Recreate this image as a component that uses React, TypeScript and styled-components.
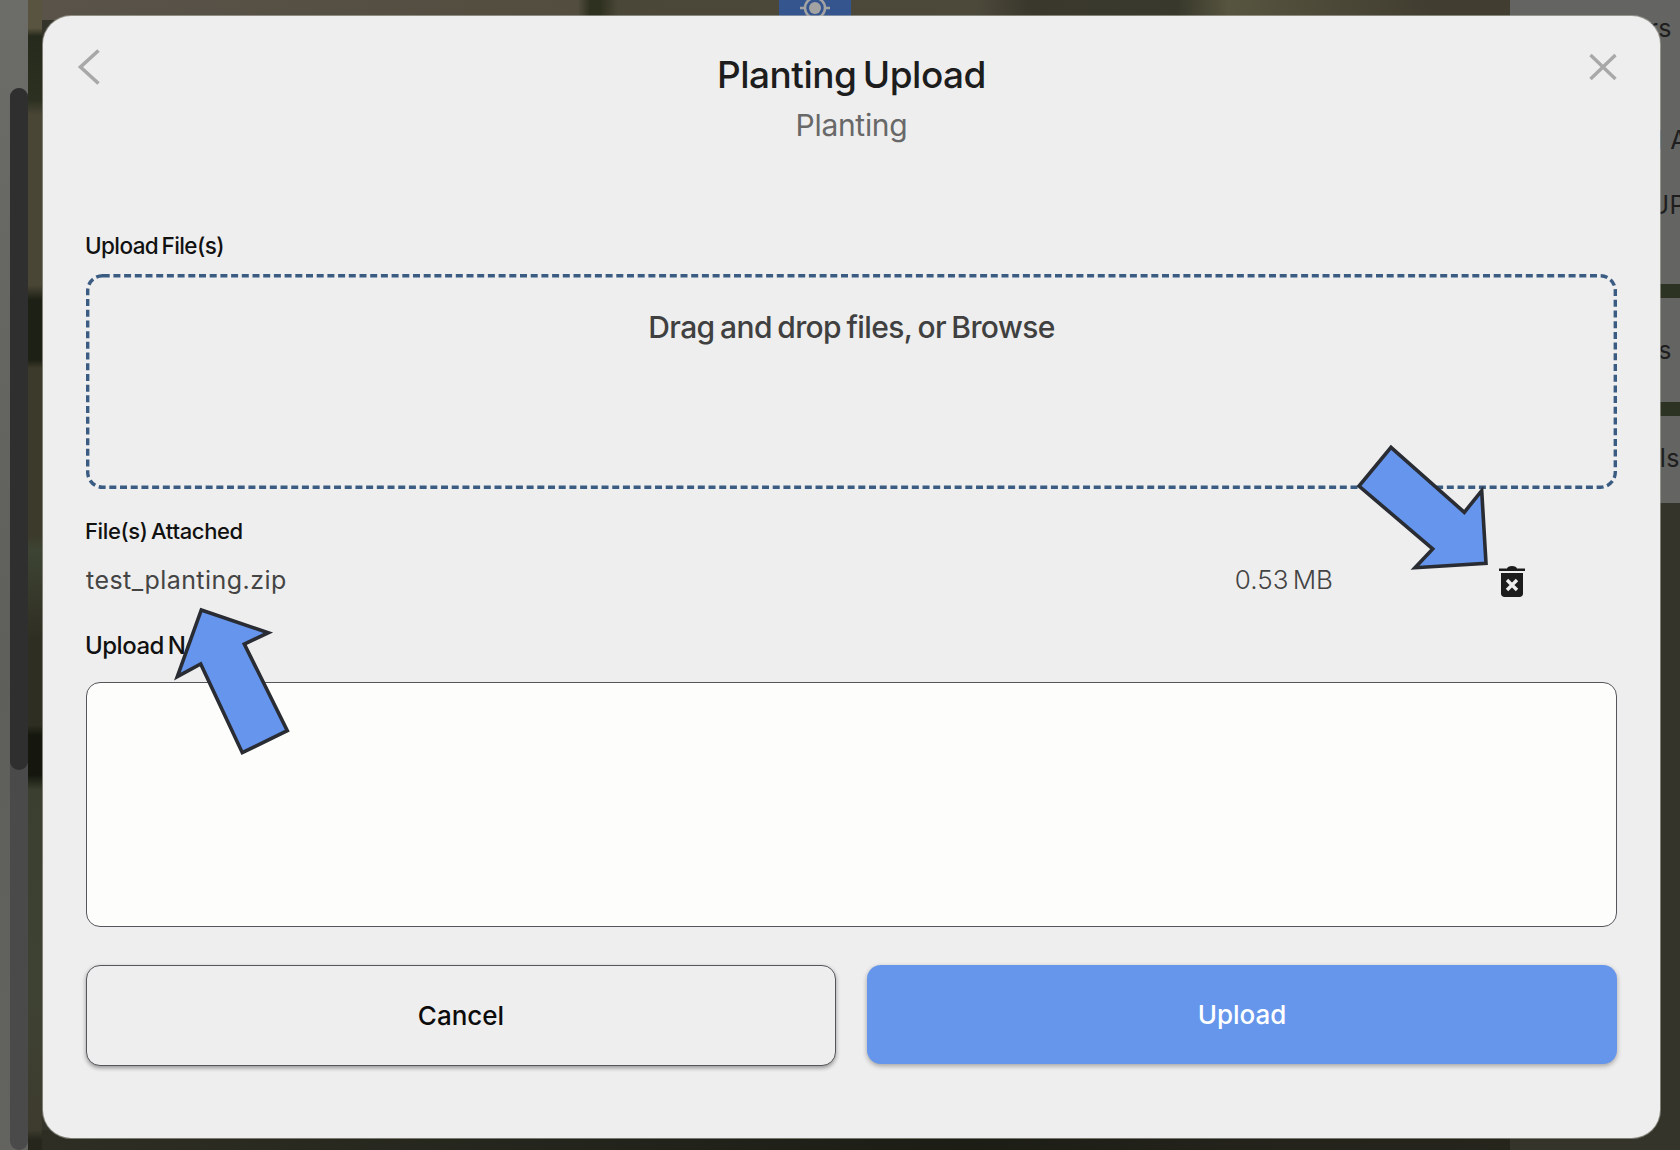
import styled, { createGlobalStyle } from "styled-components";

const GlobalStyle = createGlobalStyle`
  html, body {
    margin: 0;
    padding: 0;
    height: 100%;
    overflow: hidden;
  }
  body {
    font-family: "Inter", "Open Sans", sans-serif;
  }
`;

export default function App() {
  return (
    <Page>
      <GlobalStyle />
      <LeftRail>
        <ScrollTrack>
          <ScrollThumb />
        </ScrollTrack>
      </LeftRail>
      <MapArea>
        <LocateButton>
          <svg width="30" height="30" viewBox="0 0 30 30" fill="none" stroke="#a3a3a3" strokeWidth="2.5">
            <circle cx="15" cy="15" r="10" />
            <circle cx="15" cy="15" r="6" fill="#a3a3a3" stroke="none" />
            <path d="M15 0v5M15 25v5M0 15h5M25 15h5" />
          </svg>
        </LocateButton>
      </MapArea>
      <SidePanel>
        <SideCard $height={284}>
          <SideLabel $top={14} $right={8}>rs</SideLabel>
          <SideLabel $top={84} $right={-8}>l A</SideLabel>
          <SideLabel $top={37} $right={-6}>UP</SideLabel>
        </SideCard>
        <SideCard $height={104}>
          <SideLabel $top={38} $right={8}>s</SideLabel>
        </SideCard>
        <SideCard $height={87}>
          <SideLabel $top={28} $right={0}>ils</SideLabel>
        </SideCard>
      </SidePanel>

      <Modal>
        <Header>
          <BackIcon width="24" height="38" viewBox="0 0 24 38" fill="none">
            <path d="M21.5 2.5 3.5 19l18 16.5" stroke="#a8a8a8" strokeWidth="3.6" />
          </BackIcon>
          <TitleBlock>
            <Title>Planting Upload</Title>
            <Subtitle>Planting</Subtitle>
          </TitleBlock>
          <CloseIcon width="30" height="30" viewBox="0 0 30 30" fill="none">
            <path d="M2.5 3 27.5 27M27.5 3 2.5 27" stroke="#a8a8a8" strokeWidth="3.4" />
          </CloseIcon>
        </Header>

        <UploadLabel>Upload File(s)</UploadLabel>
        <DropZone>
          <DashedOutline width="1531" height="215" fill="none">
            <rect x="1.7" y="1.7" width="1527.6" height="211.6" rx="15" />
          </DashedOutline>
          Drag and drop files, or Browse
        </DropZone>

        <AttachedLabel>File(s) Attached</AttachedLabel>
        <FileRow>
          <FileName>test_planting.zip</FileName>
          <FileSize>0.53 MB</FileSize>
          <svg width="26" height="33" viewBox="0 0 26 33">
            <path d="M0 4.500h8C8.500 3 10 2 13 2s4.500 1 5 2.500h8V7H0z" fill="#1c1c1c" />
            <path d="M2 9h22v20.500c0 2-1.500 3.500-3.500 3.500h-15C3.500 33 2 31.500 2 29.500z" fill="#1c1c1c" />
            <path d="m8 16 10 10M18 16 8 26" stroke="#eeeeee" strokeWidth="3.4" />
          </svg>
        </FileRow>

        <NotesLabel>Upload Notes</NotesLabel>
        <NotesInput readOnly />

        <Actions>
          <CancelButton>Cancel</CancelButton>
          <UploadButton>Upload</UploadButton>
        </Actions>
      </Modal>

      <Arrow $left={1350} $top={438} width="146" height="140" viewBox="1350 438 146 140">
        <polygon points="1391,447.300 1464.300,512.300 1481.700,490.700 1486,563.300 1415,567.700 1432.700,549 1359,486" />
      </Arrow>
      <Arrow $left={168} $top={600} width="130" height="162" viewBox="168 600 130 162">
        <polygon points="201.300,610 268.300,632.700 244.300,644 287.300,730.700 242.300,752.700 200.700,664 177.300,676.700" />
      </Arrow>
    </Page>
  );
}

const Page = styled.div`
  position: relative;
  display: flex;
  width: 1680px;
  height: 1150px;
  overflow: hidden;
  background: #35342a;
`;

const LeftRail = styled.div`
  display: flex;
  justify-content: flex-end;
  width: 28px;
  flex-shrink: 0;
  background: linear-gradient(180deg, #6c6c69 0%, #5e5f5b 60%, #636460 100%);
`;

const ScrollTrack = styled.div`
  width: 18px;
  margin-top: 88px;
  background: #4a4a4a;
  border-radius: 9px;
`;

const ScrollThumb = styled.div`
  height: 682px;
  background: #2f2f2f;
  border-radius: 9px;
`;

const MapArea = styled.div`
  flex: 1;
  background:
    linear-gradient(
        180deg,
        #59543f 0,
        #59543f 28px,
        #262a1c 36px,
        #2c3020 100px,
        #4a4636 115px,
        #4a4636 285px,
        #1d2015 300px,
        #1d2015 360px,
        #3c3a2a 368px,
        #3c3a2a 535px,
        #3d4433 550px,
        #2f2e22 640px,
        #2f2e22 725px,
        #15170e 735px,
        #15170e 775px,
        #3a3f2f 790px,
        #3e4232 1000px,
        #3d3b2e 1130px,
        #26261d 1140px
      )
      0 0 / 14px 100% no-repeat,
    linear-gradient(
        90deg,
        #59534a 0,
        #524d3e 550px,
        #2f3120 562px,
        #2f3120 572px,
        #4a4738 590px,
        #4c493b 950px,
        #3a382c 1000px,
        #38392c 1150px,
        #57543f 1200px,
        #413e31 1400px
      )
      0 0 / 100% 20px no-repeat,
    linear-gradient(
        90deg,
        #2e2e24 0,
        #24251c 500px,
        #1c1d15 940px,
        #23231b 1200px,
        #26261d 1600px
      )
      0 1130px / 100% 20px no-repeat,
    #35342a;
`;

const LocateButton = styled.div`
  display: flex;
  align-items: center;
  justify-content: center;
  width: 72px;
  height: 16px;
  margin-left: 751px;
  background: #35558f;
`;

const SidePanel = styled.div`
  display: flex;
  flex-direction: column;
  gap: 14px;
  width: 170px;
  height: 503px;
  flex-shrink: 0;
  background: #2d3322;
`;

const SideCard = styled.div<{ $height: number }>`
  display: flex;
  flex-direction: column;
  height: ${(p) => p.$height}px;
  overflow: hidden;
  background: #646462;
`;

const SideLabel = styled.span<{ $top: number; $right: number }>`
  align-self: flex-end;
  margin-top: ${(p) => p.$top}px;
  margin-right: ${(p) => p.$right}px;
  color: #1e1e1e;
  font-size: 25px;
  line-height: 28px;
  letter-spacing: 0.5px;
  white-space: nowrap;
`;

const Modal = styled.div`
  position: absolute;
  top: 16px;
  left: 43px;
  box-sizing: border-box;
  display: flex;
  flex-direction: column;
  width: 1617px;
  height: 1122px;
  padding: 32px 43px 0;
  background: #eeeeee;
  border-radius: 28px;
  box-shadow: 0 0 0 1px rgba(190, 190, 180, 0.55);
`;

const Header = styled.div`
  display: grid;
  grid-template-columns: 1fr auto 1fr;
  align-items: start;
`;

const BackIcon = styled.svg`
  margin-left: -9px;
`;

const CloseIcon = styled.svg`
  justify-self: end;
  margin-top: 4px;
  margin-right: -1px;
`;

const TitleBlock = styled.div`
  display: flex;
  flex-direction: column;
  align-items: center;
  padding-top: 5px;
`;

const Title = styled.h1`
  margin: 0;
  color: #1d1d1d;
  font-size: 37px;
  font-weight: 450;
  line-height: 43px;
  letter-spacing: -0.5px;
  word-spacing: -3px;
`;

const Subtitle = styled.div`
  margin-top: 11px;
  color: #686868;
  font-size: 30px;
  font-weight: 400;
  line-height: 36px;
  letter-spacing: -0.3px;
`;

const FieldLabel = styled.div`
  margin-left: -1px;
  color: #111111;
  font-weight: 450;
  line-height: 28px;
  word-spacing: -2px;
`;

const UploadLabel = styled(FieldLabel)`
  margin-top: 89px;
  font-size: 22.5px;
  letter-spacing: -0.6px;
`;

const DropZone = styled.div`
  position: relative;
  box-sizing: border-box;
  height: 215px;
  margin-top: 14px;
  padding-top: 36px;
  color: #404040;
  font-size: 30px;
  font-weight: 450;
  line-height: 34px;
  letter-spacing: -0.6px;
  word-spacing: -2px;
  text-align: center;
`;

const DashedOutline = styled.svg`
  position: absolute;
  top: 0;
  left: 0;

  rect {
    stroke: #3b5c82;
    stroke-width: 3.4;
    stroke-dasharray: 7 3.7;
  }
`;

const AttachedLabel = styled(FieldLabel)`
  margin-top: 28px;
  font-size: 22px;
  letter-spacing: -0.35px;
`;

const FileRow = styled.div`
  display: flex;
  align-items: center;
  height: 34px;
  margin-top: 18px;
  padding-right: 92px;
`;

const FileName = styled.div`
  flex: 1;
  color: #444444;
  font-size: 25px;
  line-height: 34px;
  letter-spacing: 0.45px;
`;

const FileSize = styled.div`
  margin-right: 166px;
  color: #444444;
  font-size: 26px;
  font-weight: 300;
  line-height: 34px;
  word-spacing: -3px;
`;

const NotesLabel = styled(FieldLabel)`
  margin-top: 35px;
  font-size: 24px;
  letter-spacing: -0.5px;
`;

const NotesInput = styled.textarea`
  box-sizing: border-box;
  display: block;
  height: 245px;
  margin-top: 22px;
  background: #fdfdfb;
  border: 1.5px solid #55555c;
  border-radius: 14px;
  outline: none;
  resize: none;
`;

const Actions = styled.div`
  display: grid;
  grid-template-columns: 750px 750px;
  justify-content: space-between;
  margin-top: 38px;
`;

const CancelButton = styled.button`
  box-sizing: border-box;
  height: 101px;
  background: #eeeeee;
  border: 1.5px solid #55555c;
  border-radius: 14px;
  box-shadow: 0 2px 4px rgba(0, 0, 0, 0.38);
  color: #0c0c0c;
  font-family: inherit;
  font-size: 26px;
  font-weight: 450;
`;

const UploadButton = styled.button`
  box-sizing: border-box;
  height: 99px;
  background: #6596ec;
  border: none;
  border-radius: 14px;
  box-shadow: 0 2px 5px rgba(0, 0, 0, 0.32);
  color: #ffffff;
  font-family: inherit;
  font-size: 26px;
  font-weight: 550;
`;

const Arrow = styled.svg<{ $left: number; $top: number }>`
  position: absolute;
  left: ${(p) => p.$left}px;
  top: ${(p) => p.$top}px;

  polygon {
    fill: #6595ec;
    stroke: #2a2c33;
    stroke-width: 3.6;
    stroke-linejoin: miter;
  }
`;
